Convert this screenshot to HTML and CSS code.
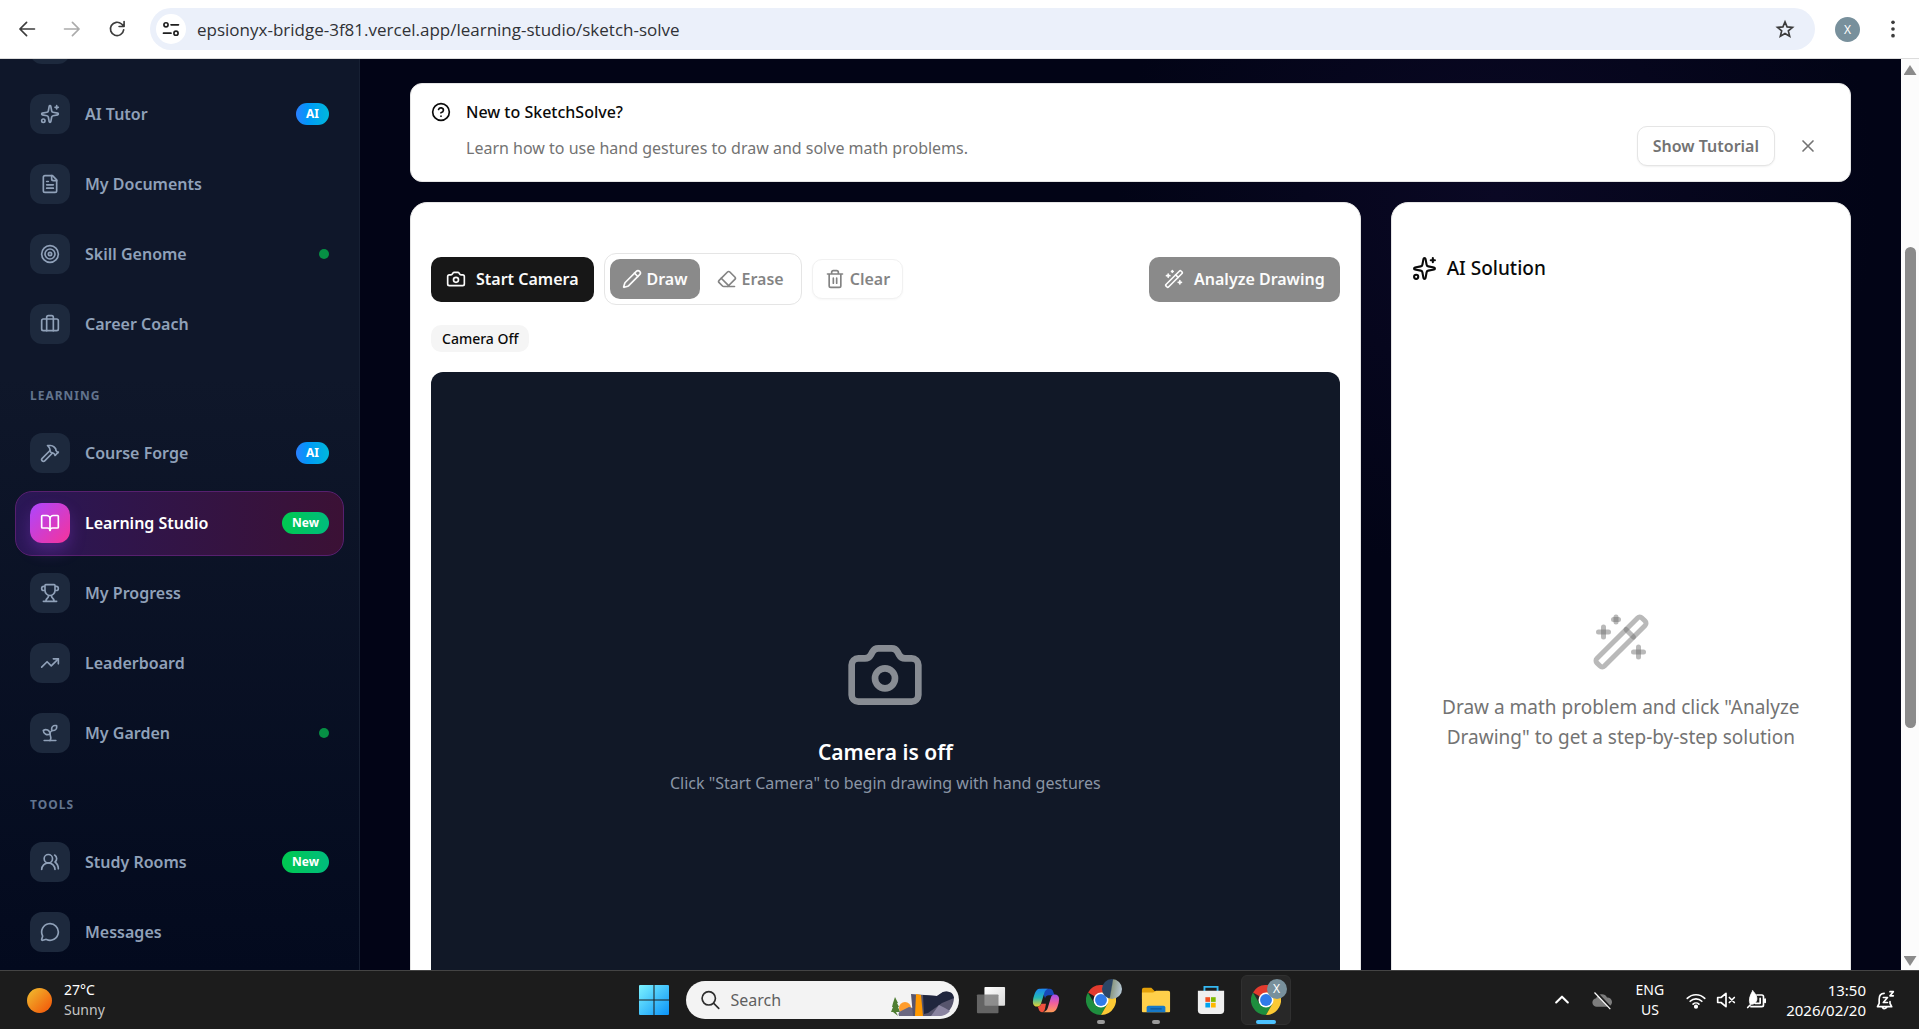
FILE: index.html
```
<!DOCTYPE html>
<html lang="en">
<head>
  <meta charset="UTF-8">
  <meta name="viewport" content="width=device-width, initial-scale=1.0">
  <title>SketchSolve - Learning Studio</title>
  <link rel="stylesheet" href="styles.css">
</head>
<body>
  <!-- Icon sprite -->
  <svg class="sprite" aria-hidden="true">
    <symbol id="i-sparkles" viewBox="0 0 24 24"><path d="M11.017 2.814a1 1 0 0 1 1.966 0l1.051 5.558a2 2 0 0 0 1.594 1.594l5.558 1.051a1 1 0 0 1 0 1.966l-5.558 1.051a2 2 0 0 0-1.594 1.594l-1.051 5.558a1 1 0 0 1-1.966 0l-1.051-5.558a2 2 0 0 0-1.594-1.594l-5.558-1.051a1 1 0 0 1 0-1.966l5.558-1.051a2 2 0 0 0 1.594-1.594z"/><path d="M20 2v4M22 4h-4"/><circle cx="4" cy="20" r="2"/></symbol>
    <symbol id="i-file" viewBox="0 0 24 24"><path d="M15 2H6a2 2 0 0 0-2 2v16a2 2 0 0 0 2 2h12a2 2 0 0 0 2-2V7Z"/><path d="M14 2v4a2 2 0 0 0 2 2h4M10 9H8M16 13H8M16 17H8"/></symbol>
    <symbol id="i-target" viewBox="0 0 24 24"><circle cx="12" cy="12" r="10"/><circle cx="12" cy="12" r="6"/><circle cx="12" cy="12" r="2"/></symbol>
    <symbol id="i-briefcase" viewBox="0 0 24 24"><path d="M16 20V4a2 2 0 0 0-2-2h-4a2 2 0 0 0-2 2v16"/><rect width="20" height="14" x="2" y="6" rx="2"/></symbol>
    <symbol id="i-hammer" viewBox="0 0 24 24"><path d="m15 12-9.373 9.373a1 1 0 0 1-3.001-3L12 9"/><path d="m18 15 4-4"/><path d="m21.5 11.5-1.914-1.914A2 2 0 0 1 19 8.172v-.344a2 2 0 0 0-.586-1.414l-1.657-1.657A6 6 0 0 0 12.516 3H9l1.243 1.243A6 6 0 0 1 12 8.485V10l2 2h1.172a2 2 0 0 1 1.414.586L18.5 14.5"/></symbol>
    <symbol id="i-book" viewBox="0 0 24 24"><path d="M12 7v14"/><path d="M3 18a1 1 0 0 1-1-1V4a1 1 0 0 1 1-1h5a4 4 0 0 1 4 4 4 4 0 0 1 4-4h5a1 1 0 0 1 1 1v13a1 1 0 0 1-1 1h-6a3 3 0 0 0-3 3 3 3 0 0 0-3-3z"/></symbol>
    <symbol id="i-trophy" viewBox="0 0 24 24"><path d="M10 14.66v1.626a2 2 0 0 1-.976 1.696A5 5 0 0 0 7 21.978M14 14.66v1.626a2 2 0 0 0 .976 1.696A5 5 0 0 1 17 21.978M18 9h1.5a1 1 0 0 0 0-5H18M4 22h16M6 9a6 6 0 0 0 12 0V3a1 1 0 0 0-1-1H7a1 1 0 0 0-1 1zM6 9H4.5a1 1 0 0 1 0-5H6"/></symbol>
    <symbol id="i-trend" viewBox="0 0 24 24"><path d="M16 7h6v6"/><path d="m22 7-8.5 8.5-5-5L2 17"/></symbol>
    <symbol id="i-sprout" viewBox="0 0 24 24"><path d="M14 9.536V7a4 4 0 0 1 4-4h1.5a.5.5 0 0 1 .5.5V5a4 4 0 0 1-4 4 4 4 0 0 0-4 4c0 2 1 3 1 5a5 5 0 0 1-1 3"/><path d="M4 9a5 5 0 0 1 8 4 5 5 0 0 1-8-4M5 21h14"/></symbol>
    <symbol id="i-users" viewBox="0 0 24 24"><path d="M18 21a8 8 0 0 0-16 0"/><circle cx="10" cy="8" r="5"/><path d="M22 20c0-3.37-2-6.5-4-8a5 5 0 0 0-.45-8.3"/></symbol>
    <symbol id="i-message" viewBox="0 0 24 24"><path d="M2.992 16.342a2 2 0 0 1 .094 1.167l-1.065 3.29a1 1 0 0 0 1.236 1.168l3.413-.998a2 2 0 0 1 1.099.092 10 10 0 1 0-4.777-4.719"/></symbol>
    <symbol id="i-help" viewBox="0 0 24 24"><circle cx="12" cy="12" r="10"/><path d="M9.09 9a3 3 0 0 1 5.83 1c0 2-3 3-3 3M12 17h.01"/></symbol>
    <symbol id="i-x" viewBox="0 0 24 24"><path d="M18 6 6 18M6 6l12 12"/></symbol>
    <symbol id="i-camera" viewBox="0 0 24 24"><path d="M13.997 4a2 2 0 0 1 1.76 1.05l.486.9A2 2 0 0 0 18.003 7H20a2 2 0 0 1 2 2v9a2 2 0 0 1-2 2H4a2 2 0 0 1-2-2V9a2 2 0 0 1 2-2h1.997a2 2 0 0 0 1.759-1.048l.489-.904A2 2 0 0 1 10.004 4z"/><circle cx="12" cy="13" r="3"/></symbol>
    <symbol id="i-pencil" viewBox="0 0 24 24"><path d="M21.174 6.812a1 1 0 0 0-3.986-3.987L3.842 16.174a2 2 0 0 0-.5.83l-1.321 4.352a.5.5 0 0 0 .623.622l4.353-1.32a2 2 0 0 0 .83-.497z"/><path d="m15 5 4 4"/></symbol>
    <symbol id="i-eraser" viewBox="0 0 24 24"><path d="M21 21H8a2 2 0 0 1-1.42-.587l-3.994-3.999a2 2 0 0 1 0-2.828l10-10a2 2 0 0 1 2.829 0l5.999 6a2 2 0 0 1 0 2.828L12.834 21"/><path d="m5.082 11.09 8.828 8.828"/></symbol>
    <symbol id="i-trash" viewBox="0 0 24 24"><path d="M10 11v6M14 11v6M19 6v14a2 2 0 0 1-2 2H7a2 2 0 0 1-2-2V6M3 6h18M8 6V4a2 2 0 0 1 2-2h4a2 2 0 0 1 2 2v2"/></symbol>
    <symbol id="i-wand" viewBox="0 0 24 24"><path d="m21.64 3.64-1.28-1.28a1.21 1.21 0 0 0-1.72 0L2.36 18.64a1.21 1.21 0 0 0 0 1.72l1.28 1.28a1.2 1.2 0 0 0 1.72 0L21.64 5.36a1.2 1.2 0 0 0 0-1.72"/><path d="m14 7 3 3"/><path d="M5 6v4"/><path d="M19 14v4"/><path d="M10 2v2"/><path d="M7 8H3"/><path d="M21 16h-4"/><path d="M11 3H9"/></symbol>
    <symbol id="i-chrome" viewBox="0 0 48 48">
      <path fill="#e33b2e" d="M24 24 3.200 12A24 24 0 0 1 44.800 12z"/>
      <path fill="#1e8e3e" d="M3.200 12A24 24 0 0 0 24 48l10.400-18L24 24 13.600 30z"/>
      <path fill="#fcc934" d="M34.400 30 24 48A24 24 0 0 0 44.800 12H24z"/>
      <circle cx="24" cy="24" r="12" fill="#fff"/><circle cx="24" cy="24" r="9.500" fill="#2f7bea"/>
    </symbol>
  </svg>

  <header class="browser-bar">
    <button class="bar-button" aria-label="Back"><svg class="icon" viewBox="0 0 24 24"><path d="M21 12H4M11.500 4 3.500 12l8 8"/></svg></button>
    <button class="bar-button muted" aria-label="Forward"><svg class="icon" viewBox="0 0 24 24"><path d="M3 12h17M12.500 4l8 8-8 8"/></svg></button>
    <button class="bar-button" aria-label="Reload"><svg class="icon" viewBox="0 0 24 24"><path d="M20 13a8 8 0 1 1-2.500-7l2.500 2.500M20.500 3v6h-6"/></svg></button>
    <div class="omnibox">
      <button class="site-info" aria-label="View site information">
        <svg class="icon" viewBox="0 0 24 24"><circle cx="6" cy="7" r="2.500"/><path d="M12 7h9M3 17h9"/><circle cx="18" cy="17" r="2.500"/></svg>
      </button>
      <input class="url" type="text" aria-label="Address" value="epsionyx-bridge-3f81.vercel.app/learning-studio/sketch-solve">
      <button class="star" aria-label="Bookmark this page"><svg class="icon" viewBox="0 0 24 24"><path stroke-linejoin="miter" d="m12 3.500 2.500 6 6.500.500-5 4.300 1.600 6.400L12 17.300l-5.600 3.400L8 14.300 3 10l6.500-.500z"/></svg></button>
    </div>
    <button class="profile" aria-label="Profile">X</button>
    <button class="bar-button menu" aria-label="Menu"><svg viewBox="0 0 24 24"><circle cx="12" cy="4" r="2.200"/><circle cx="12" cy="12" r="2.200"/><circle cx="12" cy="20" r="2.200"/></svg></button>
  </header>

  <div class="page">
    <aside class="sidebar">
      <nav class="nav">
        <a class="nav-item" href="#" aria-label="Dashboard"><span class="tile"></span></a>
        <a class="nav-item" href="#"><span class="tile"><svg class="icon"><use href="#i-sparkles"/></svg></span>AI Tutor<span class="badge ai">AI</span></a>
        <a class="nav-item" href="#"><span class="tile"><svg class="icon"><use href="#i-file"/></svg></span>My Documents</a>
        <a class="nav-item" href="#"><span class="tile"><svg class="icon"><use href="#i-target"/></svg></span>Skill Genome<span class="dot"></span></a>
        <a class="nav-item" href="#"><span class="tile"><svg class="icon"><use href="#i-briefcase"/></svg></span>Career Coach</a>
        <h2 class="nav-title">LEARNING</h2>
        <a class="nav-item" href="#"><span class="tile"><svg class="icon"><use href="#i-hammer"/></svg></span>Course Forge<span class="badge ai">AI</span></a>
        <a class="nav-item active" href="#"><span class="tile"><svg class="icon"><use href="#i-book"/></svg></span>Learning Studio<span class="badge new">New</span></a>
        <a class="nav-item" href="#"><span class="tile"><svg class="icon"><use href="#i-trophy"/></svg></span>My Progress</a>
        <a class="nav-item" href="#"><span class="tile"><svg class="icon"><use href="#i-trend"/></svg></span>Leaderboard</a>
        <a class="nav-item" href="#"><span class="tile"><svg class="icon"><use href="#i-sprout"/></svg></span>My Garden<span class="dot"></span></a>
        <h2 class="nav-title">TOOLS</h2>
        <a class="nav-item" href="#"><span class="tile"><svg class="icon"><use href="#i-users"/></svg></span>Study Rooms<span class="badge new">New</span></a>
        <a class="nav-item" href="#"><span class="tile"><svg class="icon"><use href="#i-message"/></svg></span>Messages</a>
      </nav>
    </aside>

    <main class="content">
      <section class="notice">
        <svg class="icon"><use href="#i-help"/></svg>
        <div class="notice-text">
          <h3>New to SketchSolve?</h3>
          <p>Learn how to use hand gestures to draw and solve math problems.</p>
        </div>
        <div class="notice-actions">
          <button class="button outline">Show Tutorial</button>
          <button class="close" aria-label="Dismiss"><svg class="icon"><use href="#i-x"/></svg></button>
        </div>
      </section>

      <div class="panels">
        <section class="card board">
          <div class="tools">
            <button class="button primary large"><svg class="icon"><use href="#i-camera"/></svg>Start Camera</button>
            <div class="tool-group">
              <button class="button primary" disabled><svg class="icon"><use href="#i-pencil"/></svg>Draw</button>
              <button class="button" disabled><svg class="icon"><use href="#i-eraser"/></svg>Erase</button>
            </div>
            <button class="button outline" disabled><svg class="icon"><use href="#i-trash"/></svg>Clear</button>
            <button class="button primary large analyze" disabled><svg class="icon"><use href="#i-wand"/></svg>Analyze Drawing</button>
          </div>
          <span class="status">Camera Off</span>
          <div class="video">
            <svg class="icon"><use href="#i-camera"/></svg>
            <h3>Camera is off</h3>
            <p>Click "Start Camera" to begin drawing with hand gestures</p>
          </div>
        </section>

        <section class="card solution">
          <h2><svg class="icon"><use href="#i-sparkles"/></svg>AI Solution</h2>
          <div class="empty">
            <svg class="icon"><use href="#i-wand"/></svg>
            <p>Draw a math problem and click "Analyze Drawing" to get a step-by-step solution</p>
          </div>
        </section>
      </div>
    </main>

    <div class="scrollbar" aria-hidden="true">
      <span class="arrow up"></span>
      <span class="track"><span class="thumb"></span></span>
      <span class="arrow down"></span>
    </div>
  </div>

  <footer class="taskbar">
    <button class="weather"><span class="sun"></span><span class="lines">27°C<small>Sunny</small></span></button>

    <div class="apps">
      <button class="app" aria-label="Start">
        <svg class="start" viewBox="0 0 29 29"><defs><linearGradient id="win" x1="0" y1="0" x2="29" y2="29" gradientUnits="userSpaceOnUse"><stop offset="0" stop-color="#7df3ff"/><stop offset="1" stop-color="#0a93f8"/></linearGradient></defs><path fill="url(#win)" d="M0 1q0-1 1-1h13v14H0zM15 0h13q1 0 1 1v13H15zM0 15h14v14H1q-1 0-1-1zM15 15h14v13q0 1-1 1H15z"/></svg>
      </button>
      <label class="search">
        <svg class="icon" viewBox="0 0 24 24"><circle cx="10.500" cy="10" r="8"/><path d="m16.500 16 6 6"/></svg>
        <input type="text" placeholder="Search" aria-label="Search">
        <svg class="scene" viewBox="0 0 64 26">
          <circle cx="14" cy="17" r="6" fill="#ff9d2e"/>
          <path fill="#4f7d32" d="M4 6 7 12H6l2 4H7l2 5H5l2 4-5-4H0l2-5H1l1-4z"/>
          <path fill="#6b6880" d="M8 25q-2-4 4-6l6-3 8 2 2 7z"/>
          <path fill="#57556d" d="M20 3 34 4l12 1 6-4q10-2 11 6-1 14-14 18H22z"/>
          <path fill="#20263d" d="M32 4 46 5l6-4q9-2 11 6l-12 5-14 10-4 1z"/>
          <path fill="#8a84a0" d="m40 25 8-11 6 3 5 3q-4 5-11 5z"/>
          <path fill="#ff9800" d="m25 3 5 1 2 21h-8z"/>
        </svg>
      </label>
      <button class="app" aria-label="Task view">
        <svg viewBox="0 0 32 32"><defs><linearGradient id="tv" x1="0" y1="0" x2="1" y2="1"><stop offset="0" stop-color="#fff"/><stop offset="1" stop-color="#d8d8d8"/></linearGradient></defs><rect x="9" y="2" width="22" height="20" rx="1" fill="url(#tv)"/><rect x="1" y="10" width="23" height="20" rx="1" fill="#777" opacity=".8"/></svg>
      </button>
      <button class="app" aria-label="Copilot">
        <svg viewBox="0 0 32 32"><defs><linearGradient id="cp1" x1="0" y1="0" x2="0" y2="1"><stop offset="0" stop-color="#1b87f0"/><stop offset=".5" stop-color="#25b9b5"/><stop offset="1" stop-color="#e8d02f"/></linearGradient><linearGradient id="cp2" x1="0" y1="0" x2="0" y2="1"><stop offset="0" stop-color="#a24df0"/><stop offset=".5" stop-color="#f0609c"/><stop offset="1" stop-color="#ff9b55"/></linearGradient></defs><path fill="#1849b8" d="M11 4h9q3 0 4 4l1 3h-6q-3 0-4 3z"/><path fill="url(#cp1)" d="M9 4h9q-3 1-4 5l-3 10q-1 4-4 4-5 0-5-5 0-4 2-9 2-5 5-5z"/><path fill="url(#cp2)" d="M25 10q5 0 5 5 0 4-2 9-2 5-6 5h-9q4-1 5-5l3-10q1-4 4-4z"/><path fill="#f0503c" d="M7 23q3 0 4-3h5l-1 5q-1 4-3 4-3 0-4-4z"/></svg>
      </button>
      <button class="app running" aria-label="Chrome">
        <svg><use href="#i-chrome"/></svg><span class="app-badge photo"></span>
      </button>
      <button class="app running" aria-label="File Explorer">
        <svg viewBox="0 0 32 32"><path fill="#e3a008" d="M1 5q0-2 2-2h8l4 4h14v8H1z"/><path fill="#ffd04a" d="M1 8h12l3-2h13q2 0 2 2v20q0 1-1 1H2q-1 0-1-1z"/><path fill="#1679c9" d="M6 29v-5q0-2 2-2h16q2 0 2 2v5z"/><path fill="#0b4a86" d="M10 25h12v1H10z"/></svg>
      </button>
      <button class="app" aria-label="Microsoft Store">
        <svg viewBox="0 0 32 32"><path fill="none" stroke="#35b8f1" stroke-width="2" d="M9 7V2h14v5"/><path fill="#efefef" d="M2 6h28v21q0 4-4 4H6q-4 0-4-4z"/><path fill="#f25022" d="M10 13h5v5h-5z"/><path fill="#7fba00" d="M16 13h5v5h-5z"/><path fill="#00a4ef" d="M10 19h5v5h-5z"/><path fill="#ffb900" d="M16 19h5v5h-5z"/></svg>
      </button>
      <button class="app running current" aria-label="Chrome, X">
        <svg><use href="#i-chrome"/></svg><span class="app-badge">X</span>
      </button>
    </div>

    <div class="tray">
      <button aria-label="Show hidden icons"><svg class="icon" viewBox="0 0 24 24"><path stroke-width="2.500" d="m5 15 7-7 7 7"/></svg></button>
      <button class="cloud" aria-label="OneDrive"><svg viewBox="0 0 24 24"><path fill="#7d7d7d" d="M6 20a5 5 0 0 1-1-10 7 7 0 0 1 13-1 5.500 5.500 0 0 1 1 11z"/><path stroke="#1c1c1c" stroke-width="3" d="m4 2 19 20"/><path stroke="#fff" stroke-width="1.500" d="m3 3 19 20"/></svg></button>
      <button class="lang">ENG<br>US</button>
      <button class="status-icons" aria-label="Network, volume and battery">
        <svg class="icon" viewBox="0 0 24 24"><path d="M1.500 10a15 15 0 0 1 21 0M5 13.500a10 10 0 0 1 14 0M8.500 17a5 5 0 0 1 7 0"/><circle cx="12" cy="20" r="1.500" fill="currentColor"/></svg>
        <svg class="icon" viewBox="0 0 24 24"><path d="M2 9v6h4l6 5V4L6 9zM16 9l6 6M22 9l-6 6"/></svg>
        <svg class="icon" viewBox="0 0 24 24"><path d="M13 6h6q2 0 2 2v10q0 2-2 2H6M23 11v4M5 18l-3 3"/><path fill="currentColor" stroke-width="1" d="M8 1q6 6 5 11-2 6-8 5-3-6 3-16z"/><path d="M11 16h6v-6"/></svg>
      </button>
      <button class="clock">13:50<br>2026/02/20</button>
      <button class="bell" aria-label="Notifications"><svg class="icon" viewBox="0 0 24 24"><path d="M11 4q-6 0-6 7v5l-2 4h17l-2-4v-2M9 21q2 3 5 0M10 9h5l-5 6h5M18 2h4l-4 5h4"/></svg></button>
    </div>
  </footer>
</body>
</html>
```
FILE: styles.css
```
* {
  box-sizing: border-box;
}

body {
  margin: 0;
  height: 100vh;
  display: flex;
  flex-direction: column;
  overflow: hidden;
  font-family: "Segoe UI", "Noto Sans", "Open Sans", sans-serif;
  font-size: 16px;
  color: #0a0a0a;
}

h2, h3, p {
  margin: 0;
  font-weight: 400;
}

button, input {
  font: inherit;
  color: inherit;
  border: none;
  background: none;
  padding: 0;
}

a {
  color: inherit;
  text-decoration: none;
}

svg {
  display: block;
  flex: none;
}

.sprite {
  position: absolute;
  width: 0;
  height: 0;
}

.icon {
  width: 20px;
  height: 20px;
  fill: none;
  stroke: currentColor;
  stroke-width: 2;
  stroke-linecap: round;
  stroke-linejoin: round;
}

/* Browser toolbar */
.browser-bar {
  display: flex;
  align-items: center;
  height: 59px;
  padding: 0 16px 0 17px;
  background: #ffffff;
  border-bottom: 1px solid #dcdcdc;
  color: #3c3c3c;
}

.bar-button {
  width: 20px;
  margin-right: 25px;
}

.bar-button.muted {
  color: #ababab;
}

.bar-button:nth-child(3) {
  margin-right: 23px;
}

.omnibox {
  flex: 1;
  display: flex;
  align-items: center;
  height: 42px;
  padding: 0 20px 0 6px;
  border-radius: 21px;
  background: #ebf0fa;
}

.site-info {
  display: grid;
  place-items: center;
  width: 30px;
  height: 30px;
  border-radius: 50%;
  background: #ffffff;
  color: #1f1f1f;
}

.url {
  flex: 1;
  margin-left: 11px;
  font-family: "Segoe UI", "Open Sans", sans-serif;
  font-size: 17px;
  color: #303236;
  outline: none;
}

.profile {
  width: 25px;
  height: 25px;
  margin: 0 23px 0 20px;
  border-radius: 50%;
  background: #78909c;
  color: #ffffff;
  font-size: 12px;
}

.menu {
  margin: 0;
}

.menu svg {
  width: 20px;
  height: 20px;
  fill: #3c3c3c;
}

/* Page */
.page {
  flex: 1;
  min-height: 0;
  display: flex;
  overflow: hidden;
  background: radial-gradient(circle at 78% 15%, #0a0824 0, #020416 380px), #020416;
}

.sidebar {
  width: 360px;
  flex: none;
  overflow: hidden;
  border-right: 1px solid #172033;
  background: linear-gradient(#0f172a 0, #0f172a 35%, #030a1e 100%);
}

/* the list is scrolled a little, so its first entry is cut off */
.nav {
  display: flex;
  flex-direction: column;
  gap: 5px;
  margin-top: -47px;
  padding: 0 15px;
}

.nav-item {
  display: flex;
  align-items: center;
  gap: 15px;
  padding: 11px 14px 12px;
  border: 1px solid transparent;
  border-radius: 17px;
  color: #90a1b9;
  font-weight: 600;
}

.nav-title {
  margin: 24px 0 10px 15px;
  font-size: 12px;
  line-height: 20px;
  font-weight: 700;
  letter-spacing: 1px;
  color: #62748e;
}

.tile {
  display: grid;
  place-items: center;
  width: 40px;
  height: 40px;
  border-radius: 12px;
  background: #1d293d;
}

.nav-item.active {
  color: #ffffff;
  border-color: #57206f;
  background: linear-gradient(90deg, #2a1756, #3b1135);
}

.nav-item.active .tile {
  background: linear-gradient(135deg, #ad46ff, #f6339a);
  box-shadow: 0 8px 16px rgba(173, 70, 255, 0.25);
}

.badge {
  margin-left: auto;
  padding: 0 10px;
  border-radius: 12px;
  font-size: 12px;
  line-height: 22px;
  font-weight: 700;
  color: #ffffff;
}

.ai {
  background: linear-gradient(90deg, #2b7fff, #0098f8 35%, #00b8db);
}

.new {
  background: linear-gradient(90deg, #00c950, #00bc7d);
}

.dot {
  width: 10px;
  height: 10px;
  margin-left: auto;
  border-radius: 50%;
  background: #068f44;
}

.content {
  flex: 1;
  min-width: 0;
  padding: 24px 50px 0;
}

.notice {
  display: flex;
  gap: 15px;
  padding: 15px 20px;
  border: 1px solid #e5e5e5;
  border-radius: 12px;
  background: #ffffff;
}

.notice > .icon {
  margin-top: 3px;
}

.notice-text {
  flex: 1;
  padding-bottom: 4px;
}

.notice h3 {
  margin-bottom: 8px;
  font-size: 16px;
  line-height: 27px;
  font-weight: 500;
}

.notice p {
  line-height: 28px;
  color: #737373;
}

.notice-actions {
  display: flex;
  align-self: flex-end;
  align-items: center;
  color: #737373;
}

.close {
  width: 44px;
  margin-left: 11px;
  display: grid;
  place-items: center;
}

.panels {
  display: grid;
  grid-template-columns: repeat(3, 1fr);
  gap: 30px;
  margin-top: 20px;
}

.card {
  border: 1px solid #e5e5e5;
  border-radius: 17px;
  background: #ffffff;
}

.board {
  grid-column: span 2;
  padding: 50px 20px;
}

.tools {
  display: flex;
  align-items: center;
  gap: 10px;
}

.button {
  display: flex;
  align-items: center;
  gap: 5px;
  height: 40px;
  padding: 0 12px;
  border-radius: 10px;
  font-weight: 600;
  color: #0a0a0a;
}

.button:disabled {
  opacity: 0.5;
}

.button.primary {
  background: #171717;
  color: #fafafa;
}

.button.outline {
  border: 1px solid #e5e5e5;
  background: #ffffff;
  box-shadow: 0 1px 2px rgba(0, 0, 0, 0.06);
}

.notice .button {
  padding: 0 15px;
  color: #737373;
}

.button.large {
  gap: 10px;
  height: 45px;
  padding: 0 15px;
}

.tool-group {
  display: flex;
  gap: 5px;
  padding: 5px;
  border: 1px solid #e5e5e5;
  border-radius: 12px;
}

.analyze {
  margin-left: auto;
}

.status {
  display: inline-block;
  margin: 20px 0;
  padding: 0 11px;
  border-radius: 10px;
  background: #f5f5f5;
  font-size: 14px;
  line-height: 27px;
  font-weight: 500;
  vertical-align: top;
}

.video {
  display: flex;
  flex-direction: column;
  align-items: center;
  justify-content: center;
  aspect-ratio: 4 / 3;
  padding-top: 6px;
  border-radius: 12px;
  background: #111827;
}

.video .icon {
  width: 80px;
  height: 80px;
  margin-bottom: 20px;
  color: #888c93;
}

.video h3 {
  font-size: 21px;
  line-height: 35px;
  font-weight: 600;
  color: #ffffff;
}

.video p {
  line-height: 26px;
  color: #8a95a5;
}

.solution {
  display: flex;
  flex-direction: column;
  padding: 50px 20px;
}

.solution h2 {
  display: flex;
  align-items: center;
  gap: 10px;
  font-size: 19px;
  line-height: 30px;
  font-weight: 500;
}

.solution h2 .icon {
  width: 25px;
  height: 25px;
}

.empty {
  padding: 329px 20px 0;
  text-align: center;
  font-size: 19px;
  line-height: 30px;
  color: #737373;
}

.empty .icon {
  width: 60px;
  height: 60px;
  margin: 0 auto 20px;
  stroke: rgba(115, 115, 115, 0.5);
}

.scrollbar {
  display: flex;
  flex-direction: column;
  align-items: center;
  width: 18px;
  padding: 6px 0 4px;
  background: #fcfcfc;
}

.track {
  flex: 1;
  width: 11px;
}

.thumb {
  display: block;
  height: 54.6%;
  margin-top: 172px;
  border-radius: 6px;
  background: #8b8b8b;
}

.arrow {
  width: 13px;
  height: 10px;
  background: #8b8b8b;
}

.up {
  clip-path: polygon(50% 0, 100% 100%, 0 100%);
}

.down {
  clip-path: polygon(0 0, 100% 0, 50% 100%);
}

/* Taskbar */
.taskbar {
  display: grid;
  grid-template-columns: 1fr auto 1fr;
  align-items: center;
  height: 59px;
  border-top: 1px solid #444444;
  background: #1c1c1c;
  color: #ffffff;
  font-size: 14px;
  line-height: 20px;
}

.weather {
  display: flex;
  align-items: center;
  gap: 12px;
  padding-left: 27px;
  text-align: left;
}

.sun {
  width: 25px;
  height: 25px;
  border-radius: 50%;
  background: linear-gradient(135deg, #f0c030, #f2660f 80%);
}

.lines small {
  display: block;
  font-size: 14px;
  color: #c5c5c5;
}

.apps {
  display: flex;
  align-items: center;
  gap: 5px;
}

.app {
  position: relative;
  display: grid;
  place-items: center;
  width: 50px;
  height: 50px;
  border: 1px solid transparent;
  border-radius: 6px;
}

.app svg {
  width: 30px;
  height: 30px;
}

.running::after {
  content: "";
  position: absolute;
  bottom: 0;
  width: 8px;
  height: 4px;
  border-radius: 2px;
  background: #9a9a9a;
}

.current {
  background: #282828;
  border-color: #303030;
}

.current::after {
  width: 20px;
  background: #4cc2ff;
}

.app-badge {
  position: absolute;
  top: 3px;
  right: 3px;
  width: 20px;
  height: 20px;
  border-radius: 50%;
  background: #78909c;
  font-size: 12px;
  line-height: 20px;
}

.photo {
  background: linear-gradient(100deg, #2b4666 45%, #8e9b86 50%, #bdd0e4);
}

.search {
  display: flex;
  align-items: center;
  width: 273px;
  height: 38px;
  margin: 0 2px;
  padding: 0 4px 0 14px;
  border-radius: 19px;
  background: #f3f3f3;
  color: #2d2d2d;
}

.search input {
  flex: 1;
  min-width: 0;
  margin-left: 11px;
  font-size: 16px;
  outline: none;
}

.search input::placeholder {
  color: #5f5f5f;
}

.scene {
  align-self: flex-end;
  width: 64px;
  height: 26px;
  margin-bottom: 2px;
}

.tray {
  display: flex;
  align-items: center;
  justify-content: flex-end;
  padding-right: 24px;
}

.cloud {
  margin: 0 24px 0 20px;
}

.cloud svg {
  width: 20px;
  height: 20px;
  fill: none;
}

.status-icons {
  display: flex;
  gap: 10px;
  margin: 0 20px 0 22px;
}

.clock {
  margin-right: 9px;
  font-size: 15px;
  text-align: right;
}
```
